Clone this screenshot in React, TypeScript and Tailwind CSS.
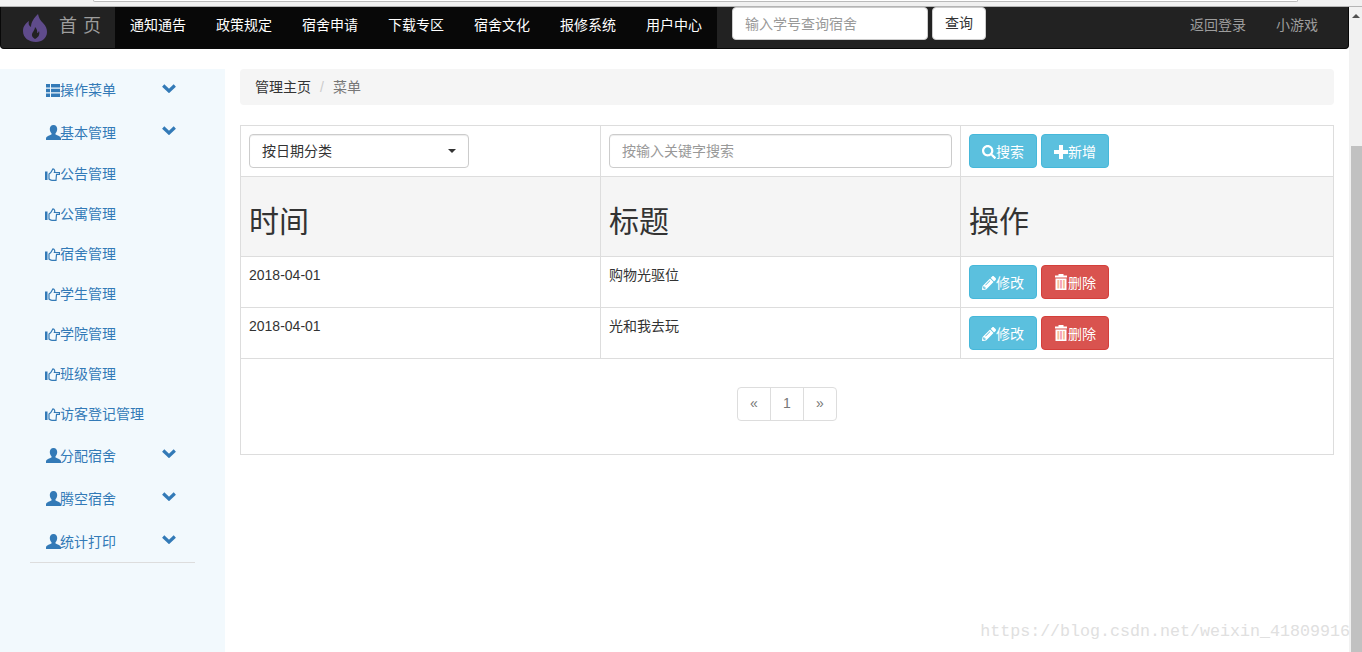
import { ReactNode } from "react";
import { FaPencilAlt, FaSearch } from "react-icons/fa";

const navLinks = ["通知通告", "政策规定", "宿舍申请", "下载专区", "宿舍文化", "报修系统", "用户中心"];
const subMenus = ["公告管理", "公寓管理", "宿舍管理", "学生管理", "学院管理", "班级管理", "访客登记管理"];
const rows = [
  { date: "2018-04-01", title: "购物光驱位" },
  { date: "2018-04-01", title: "光和我去玩" },
];

function Flame() {
  return (
    <svg width="24" height="28" viewBox="0 0 24 28" className="ml-[22px]">
      <path
        fill="#5f4b8b"
        d="M15 0C16 4 17 6 20 9C23 12 24 15 24 18C24 24 19 28 13 28C6 28 0 24 0 17C0 12 3 9 6 7C5 10 6 12 8 13C8 8 11 4 15 0z"
      />
      <path
        fill="#222"
        d="M12 25C9 23 8 21 10 18C11 16 12 15 12 13C14 15 14.500 17 14 19C15 19 15.500 18 16 17C17 20 16 23 12 25z"
      />
    </svg>
  );
}

function ListIcon() {
  return (
    <svg width="14" height="13" viewBox="0 0 14 13" fill="#337ab7">
      <path d="M0 0h4v3.6H0zM5 0h9v3.6H5zM0 4.7h4v3.6H0zM5 4.7h9v3.6H5zM0 9.4h4V13H0zM5 9.4h9V13H5z" />
    </svg>
  );
}

function UserIcon() {
  return (
    <svg width="15" height="15" viewBox="0 0 15 15" fill="#337ab7" className="mb-[2px] shrink-0">
      <path d="M7.500 0C5 0 3.800 1.800 3.800 4c0 1.800.8 3.300 1.700 4.200v1.300C3.800 10.500 0 11.200 0 13.500V15h15v-1.500C15 11.200 11.200 10.500 9.500 9.500V8.200c.9-.9 1.700-2.400 1.700-4.200C11.200 1.800 10 0 7.500 0z" />
    </svg>
  );
}

function HandIcon() {
  return (
    <svg width="15" height="13" viewBox="0 0 15 13" className="shrink-0">
      <rect x="0" y="3.500" width="2.500" height="8.500" fill="#337ab7" />
      <path
        fill="none"
        stroke="#337ab7"
        strokeWidth="1.200"
        d="M4 6C6 5 7 3 8 .8C9.500 .8 10.200 3 9.400 4.500H14.500V6.300H11.500L11 12.300H7C6 12.300 5 12 4 11z"
      />
    </svg>
  );
}

function ChevronIcon() {
  return (
    <svg width="14" height="9" viewBox="0 0 14 9" className="mb-[4px]">
      <path fill="none" stroke="#337ab7" strokeWidth="3.200" d="M1.200 1.500L7 7l5.800-5.500" />
    </svg>
  );
}

function PlusIcon() {
  return (
    <svg width="14" height="14" viewBox="0 0 14 14" fill="#fff">
      <path d="M5 0h4v5h5v4H9v5H5V9H0V5h5z" />
    </svg>
  );
}

function TrashIcon() {
  return (
    <svg width="14" height="16" viewBox="0 0 14 16" className="mb-[3px]">
      <path fill="#fff" d="M4.500 0h5v1.500H13V3.500H1V1.500h3.500zM1.500 4.500h11V16h-11z" />
      <path fill="#f6c39a" d="M3.300 6h2v8.500h-2z" />
      <path fill="#f7a9c0" d="M6 6h2v8.500H6z" />
      <path fill="#f6c39a" d="M8.800 6h2v8.500h-2z" />
    </svg>
  );
}

function MenuHeader({ icon, label, tall }: { icon: ReactNode; label: string; tall?: boolean }) {
  return (
    <div className={`flex items-center pl-[46px] text-[#337ab7] ${tall ? "h-[43px]" : "h-[42px]"}`}>
      <span className="flex w-[14px] justify-center pt-[1px]">{icon}</span>
      <span className={`w-[103px] ${tall ? "pt-[2px]" : "pt-[1px]"}`}>{label}</span>
      <span className="-ml-px">
        <ChevronIcon />
      </span>
    </div>
  );
}

function ActionButton({ icon, label, danger }: { icon: ReactNode; label: string; danger?: boolean }) {
  return (
    <button
      className={`flex h-[34px] w-[68px] items-center justify-center rounded border pt-[2px] text-white ${
        danger ? "border-[#d43f3a] bg-[#d9534f]" : "border-[#46b8da] bg-[#5bc0de]"
      }`}
    >
      {icon}
      {label}
    </button>
  );
}

export default function App() {
  return (
    <div className="flex h-[652px] flex-col overflow-hidden bg-white text-[14px] text-[#333] font-['Liberation_Sans','Noto_Sans_CJK_SC',sans-serif]">
      <div className="h-[7px] shrink-0 border-b border-[#b5b5b5] bg-[#f1f1f1] pl-[93px] pr-[64px]">
        <div className="h-[2px] rounded-b-sm border-x border-b border-[#bbb] bg-white" />
      </div>

      <div className="flex min-h-0 flex-1">
        <div className="relative flex min-w-0 flex-1 flex-col">
          <nav className="flex h-[42px] shrink-0 items-stretch rounded-b border-b border-x border-[#080808] bg-[#222]">
            <div className="flex w-[114px] items-center">
              <Flame />
              <span className="mb-[2px] ml-[12px] text-[18px] tracking-[6px] text-[#9d9d9d]">首页</span>
            </div>
            <div className="flex bg-[#080808]">
              {navLinks.map((link) => (
                <a key={link} className="flex items-center px-[15px] pb-[4px] text-white">
                  {link}
                </a>
              ))}
            </div>
            <div className="ml-[15px] flex gap-[4px]">
              <input
                placeholder="输入学号查询宿舍"
                className="h-[33px] w-[196px] rounded border border-[#ccc] bg-white px-3 text-[14px] placeholder:text-[#999]"
              />
              <button className="h-[33px] w-[54px] rounded border border-[#ccc] bg-white text-[#333]">查询</button>
            </div>
            <div className="ml-auto flex text-[#9d9d9d]">
              <a className="flex items-center px-[15px] pb-[4px]">返回登录</a>
              <a className="flex items-center px-[15px] pb-[4px]">小游戏</a>
              <span className="w-[15px]" />
            </div>
          </nav>

          <div className="mt-[20px] flex min-h-0 flex-1">
            <aside className="w-[225px] shrink-0 bg-[#f2f9fd]">
              <MenuHeader icon={<ListIcon />} label="操作菜单" />
              <MenuHeader icon={<UserIcon />} label="基本管理" tall />
              {subMenus.map((menu) => (
                <div key={menu} className="flex h-[40px] items-center pl-[45px] text-[#337ab7]">
                  <HandIcon />
                  {menu}
                </div>
              ))}
              <MenuHeader icon={<UserIcon />} label="分配宿舍" tall />
              <MenuHeader icon={<UserIcon />} label="腾空宿舍" tall />
              <MenuHeader icon={<UserIcon />} label="统计打印" tall />
              <div className="mx-[30px] -mt-px border-b border-[#ddd]" />
            </aside>

            <main className="min-w-0 flex-1 pl-[15px] pr-[15px]">
              <div className="flex h-[36px] items-center rounded bg-[#f5f5f5] px-[15px]">
                <span>管理主页</span>
                <span className="px-[9px] text-[#ccc]">/</span>
                <span className="text-[#777]">菜单</span>
              </div>

              <table className="mt-[20px] w-[1094px] table-fixed border-collapse border border-[#ddd]">
                <colgroup>
                  <col className="w-[360px]" />
                  <col className="w-[360px]" />
                  <col />
                </colgroup>
                <tbody>
                  <tr className="h-[51px]">
                    <td className="border border-[#ddd] px-2 align-middle">
                      <div className="flex h-[34px] w-[220px] items-center justify-between rounded border border-[#ccc] pl-3 pr-3 shadow-[inset_0_1px_1px_rgba(0,0,0,0.075)]">
                        按日期分类
                        <span className="border-x-[4px] border-t-[4px] border-x-transparent border-t-[#333]" />
                      </div>
                    </td>
                    <td className="border border-[#ddd] px-2 align-middle">
                      <input
                        placeholder="按输入关键字搜索"
                        className="block h-[34px] w-[343px] rounded border border-[#ccc] px-3 text-[14px] shadow-[inset_0_1px_1px_rgba(0,0,0,0.075)] placeholder:text-[#999]"
                      />
                    </td>
                    <td className="border border-[#ddd] px-2 align-middle">
                      <div className="flex gap-[4px]">
                        <ActionButton icon={<FaSearch className="text-[14px]" />} label="搜索" />
                        <ActionButton icon={<PlusIcon />} label="新增" />
                      </div>
                    </td>
                  </tr>
                  <tr className="h-[80px] bg-[#f5f5f5] text-[30px]">
                    <td className="border border-[#ddd] px-2 pt-[10px] font-normal">时间</td>
                    <td className="border border-[#ddd] px-2 pt-[10px] font-normal">标题</td>
                    <td className="border border-[#ddd] px-2 pt-[10px] font-normal">操作</td>
                  </tr>
                  {rows.map((row) => (
                    <tr key={row.title} className="h-[51px]">
                      <td className="border border-[#ddd] px-2 pt-2 align-top">{row.date}</td>
                      <td className="border border-[#ddd] px-2 pt-2 align-top">{row.title}</td>
                      <td className="border border-[#ddd] px-2 align-middle">
                        <div className="flex gap-[4px]">
                          <ActionButton icon={<FaPencilAlt className="text-[14px]" />} label="修改" />
                          <ActionButton icon={<TrashIcon />} label="删除" danger />
                        </div>
                      </td>
                    </tr>
                  ))}
                  <tr className="h-[96px]">
                    <td colSpan={3} className="border border-[#ddd] pb-[6px] align-middle">
                      <div className="flex justify-center">
                        <div className="flex h-[34px] rounded border border-[#ddd] text-[#777]">
                          <span className="flex w-[33px] items-center justify-center border-r border-[#ddd]">«</span>
                          <span className="flex w-[33px] items-center justify-center border-r border-[#ddd]">1</span>
                          <span className="flex w-[32px] items-center justify-center">»</span>
                        </div>
                      </div>
                    </td>
                  </tr>
                </tbody>
              </table>
            </main>
          </div>

          <div className="absolute bottom-[8px] right-[-1px] text-[16.67px] leading-[24px] text-[#e0e0e0] font-['Liberation_Mono',monospace]">
            https://blog.csdn.net/weixin_41809916
          </div>
        </div>

        <div className="flex w-[13px] shrink-0 flex-col bg-[#f1f1f1]">
          <div className="flex h-[17px] items-center justify-center">
            <span className="border-x-[4px] border-b-[4px] border-x-transparent border-b-[#505050]" />
          </div>
          <div className="mt-[122px] ml-[2px] flex-1 bg-[#c1c1c1]" />
        </div>
      </div>
    </div>
  );
}
